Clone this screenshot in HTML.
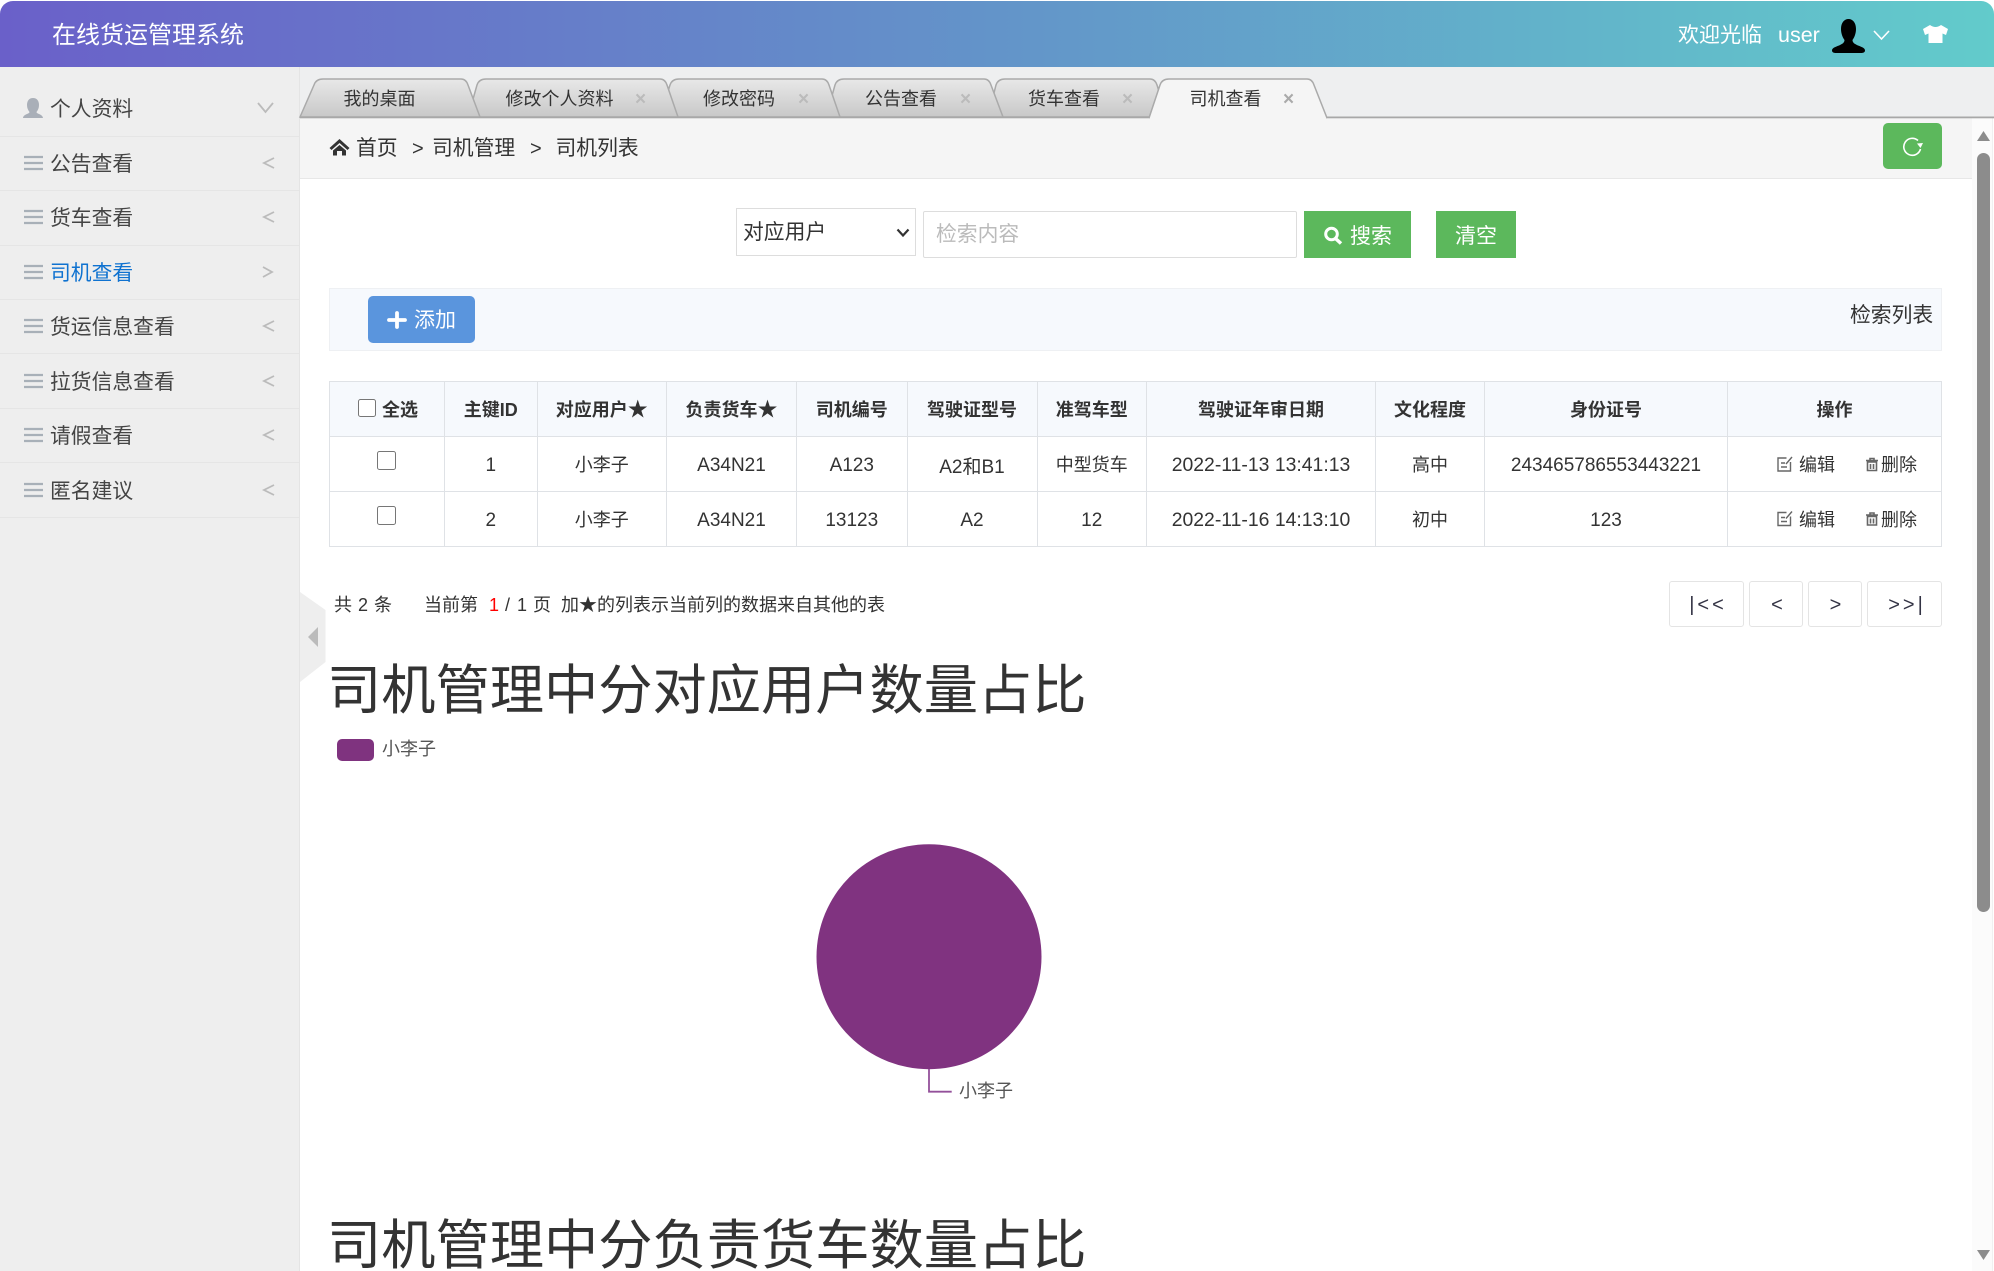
<!DOCTYPE html>
<html lang="zh-CN"><head><meta charset="utf-8"><title>在线货运管理系统</title>
<style>
html,body{margin:0;padding:0;width:1994px;height:1271px;overflow:hidden;background:#fff}
body{position:relative;font-family:"Liberation Sans","Noto Sans CJK SC",sans-serif;color:#333}
.b{position:absolute;box-sizing:border-box}
.t{position:absolute;white-space:nowrap;line-height:1}
svg{position:absolute;left:0;top:0}
.m{font-size:20.8px;color:#444;left:50px}
.tab{font-size:18px;color:#333}
.x{font-size:19px;color:#bbb;font-weight:bold}
.d{position:absolute;left:0;width:299px;height:1px;background:#e5e5e5}
table{position:absolute;left:329px;top:381px;width:1612px;border-collapse:collapse;table-layout:fixed;font-size:18px;color:#333;text-align:center}
th,td{border:1px solid #dfe2e6;padding:0;height:54px;overflow:hidden}
th{background:#f6f9fd;font-weight:bold;color:#333;line-height:1;padding-top:1px;height:53px}
th i{font-style:normal;font-size:20px;line-height:1}
td.n{font-size:19px;padding-top:3px;height:51px}
td.w{font-size:19.4px;padding-top:3px;height:51px}
input[type=checkbox]{margin:0;padding:0}
input::placeholder{color:#bbb;opacity:1}
.p{position:absolute;top:581px;height:46px;box-sizing:border-box;border:1px solid #e4e4e4;border-radius:3px;background:#fff;font-size:20px;color:#334;text-align:center;line-height:46px;letter-spacing:3px;padding-left:5px}
h2{position:absolute;left:327px;margin:0;font-size:54.25px;font-weight:normal;line-height:1;color:#333;white-space:nowrap}
</style></head><body>
<div class="b" style="left:0;top:1px;width:1994px;height:66px;border-radius:13px 13px 0 0;background:linear-gradient(90deg,#6a60c9,#6394c9 50%,#62cbcb)"></div>
<div class="b" style="left:0;top:67px;width:300px;height:1204px;background:#eee;border-right:1px solid #e4e4e4"></div>
<div class="b" style="left:300px;top:67px;width:1694px;height:50px;background:#eeeff0"></div>
<div class="b" style="left:300px;top:118px;width:1672px;height:61px;background:#f5f5f5;border-bottom:1px solid #e7e7e7"></div>
<div class="b" style="left:1972px;top:118px;width:21px;height:1153px;background:#fbfbfb;border-right:1px solid #f0f0f0"></div>
<div class="d" style="top:136px"></div><div class="d" style="top:190px"></div><div class="d" style="top:245px"></div><div class="d" style="top:299px"></div><div class="d" style="top:353px"></div><div class="d" style="top:408px"></div><div class="d" style="top:462px"></div><div class="d" style="top:517px"></div>
<div class="b" style="left:329px;top:288px;width:1613px;height:63px;background:#f6f9fd;border:1px solid #eef0f3"></div>
<svg width="1994" height="1271" viewBox="0 0 1994 1271">
<defs><linearGradient id="g" x1="0" y1="0" x2="0" y2="1"><stop offset="0" stop-color="#e8e8e8"/><stop offset="1" stop-color="#c8c8c8"/></linearGradient></defs>
<g fill="url(#g)" stroke="#aaa" stroke-width="1.5">
<path d="M988 117L996 85Q998 79 1005 79H1150Q1155 79 1157 85L1167 117Z"/>
<path d="M826 117L835 85Q837 79 844 79H984Q989 79 991 85L1003 117Z"/>
<path d="M660 117L670 85Q672 79 679 79H822Q827 79 829 85L840 117Z"/>
<path d="M468 117L477 85Q479 79 486 79H660Q665 79 667 85L678 117Z"/>
<path d="M300 117L314 85Q316 79 323 79H461Q466 79 468 85L480 117Z"/>
</g>
<rect x="300" y="116.500" width="1694" height="1.8" fill="#a8a8a8"/>
<path d="M1149 118L1160 85Q1162 79 1169 79H1307Q1312 79 1314 85L1327 118" fill="#f5f5f5" stroke="#aaa" stroke-width="1.5"/>
<path d="M1150 117.500H1326V119H1150Z" fill="#f5f5f5"/>
<!-- sidebar icons -->
<path d="M33 98c4 0 6 3 6 7 0 3-1 5-2.500 7 0 2 6 2 6.500 6H23c.5-4 6.500-4 6.500-6-1.500-2-2.500-4-2.500-7 0-4 2-7 6-7z" fill="#a9afb8"/>
<g stroke="#a8b0b8" stroke-width="2.200" fill="none">
<path d="M24 157H43M24 163H43M24 169H43"/><path d="M24 211H43M24 217H43M24 223H43"/><path d="M24 266H43M24 272H43M24 278H43"/><path d="M24 320H43M24 326H43M24 332H43"/><path d="M24 375H43M24 381H43M24 387H43"/><path d="M24 429H43M24 435H43M24 441H43"/><path d="M24 484H43M24 490H43M24 496H43"/>
</g>
<g stroke="#bbb" stroke-width="1.800" fill="none">
<path d="M258 103L265.500 112L273 103"/>
<path d="M274 158L264 163L274 168"/><path d="M274 212L264 217L274 222"/>
<path d="M263 267L272 272L263 277"/>
<path d="M274 321L264 326L274 331"/><path d="M274 376L264 381L274 386"/><path d="M274 430L264 435L274 440"/><path d="M274 485L264 490L274 495"/>
</g>
<!-- collapse handle -->
<path d="M300 592L325.500 610V662L300 682Z" fill="#eee"/>
<path d="M318 627V647L308 637Z" fill="#bbb"/>
<!-- header icons -->
<path d="M1848.500 19C1853 19 1856 23 1856 29C1856 34 1854 38 1852.500 40C1852.500 43 1855 44 1858 45.500C1862 47 1865 48 1865 50.500C1865 52.500 1863 53 1861 53L1836 53C1834 53 1832 52.500 1832 50.500C1832 48 1835 47 1839 45.500C1842 44 1844.500 43 1844.500 40C1843 38 1841 34 1841 29C1841 23 1844 19 1848.500 19Z" fill="#000"/>
<path d="M1874 31L1881.500 39L1889 31" stroke="#fff" stroke-width="1.600" fill="none"/>
<path d="M1930 25Q1935.500 29 1941 25L1948 29L1946 35L1942.500 33.500L1942.500 43L1928.500 43L1928.500 33.500L1925 35L1923 29Z" fill="#fff"/>
<!-- breadcrumb home -->
<path d="M339.500 139L349.500 148L347.500 150L339.500 143L331.500 150L329.500 148Z" fill="#333"/>
<path d="M333 150.500L339.500 145L346 150.500V155.500H342V151H337V155.500H333Z" fill="#333"/>
<!-- refresh -->
<rect x="1883" y="123" width="59" height="46" rx="5" fill="#5cb85c"/>
<path d="M1918 140.500A8.500 8.500 0 1 0 1920.500 149" stroke="#fff" stroke-width="1.600" fill="none"/>
<path d="M1917 143.500L1923 143L1920.500 148Z" fill="#fff"/>
<!-- scrollbar -->
<path d="M1983.500 131L1990 141H1977Z" fill="#8c8c8c"/>
<rect x="1977" y="153" width="13" height="759" rx="6.500" fill="#8c8c8c"/>
<path d="M1977 1250H1990L1983.500 1260Z" fill="#8c8c8c"/>
<!-- search/clear/add -->
<rect x="1304" y="211" width="107" height="47" fill="#5cb85c"/>
<rect x="1436" y="211" width="80" height="47" fill="#5cb85c"/>
<circle cx="1331.500" cy="234" r="5.800" stroke="#fff" stroke-width="3" fill="none"/>
<path d="M1335.500 238.500L1341 243.500" stroke="#fff" stroke-width="3.500"/>
<rect x="368" y="296" width="107" height="47" rx="5" fill="#5a95dd"/>
<path d="M397 313V327M389 320H405" stroke="#fff" stroke-width="3.800" stroke-linecap="round"/>
<!-- pie -->
<rect x="337" y="739" width="37" height="22" rx="5" fill="#7f337f"/>
<circle cx="929" cy="956.700" r="112.500" fill="#803380"/>
<path d="M929 1069V1091.700H951.700" stroke="#93509a" stroke-width="1.800" fill="none"/>
</svg>
<div class="t" style="left:52px;top:24px;font-size:24px;color:#fff">在线货运管理系统</div>
<div class="t" style="left:1678px;top:25px;font-size:21px;color:#fff">欢迎光临</div>
<div class="t" style="left:1778px;top:25px;font-size:21.500px;color:#fff">user</div>
<div class="t tab" style="left:343.500px;top:90px">我的桌面</div>
<div class="t tab" style="left:505.500px;top:90px">修改个人资料</div><div class="t x" style="left:635px;top:90px">×</div>
<div class="t tab" style="left:703px;top:90px">修改密码</div><div class="t x" style="left:798px;top:90px">×</div>
<div class="t tab" style="left:865px;top:90px">公告查看</div><div class="t x" style="left:960px;top:90px">×</div>
<div class="t tab" style="left:1028px;top:90px">货车查看</div><div class="t x" style="left:1122px;top:90px">×</div>
<div class="t tab" style="left:1189.500px;top:90px">司机查看</div><div class="t x" style="left:1283px;top:90px;color:#aaa">×</div>
<div class="t m" style="top:100px">个人资料</div>
<div class="t m" style="top:155px">公告查看</div>
<div class="t m" style="top:209px">货车查看</div>
<div class="t m" style="top:264px;color:#0f72d0">司机查看</div>
<div class="t m" style="top:318px">货运信息查看</div>
<div class="t m" style="top:373px">拉货信息查看</div>
<div class="t m" style="top:427px">请假查看</div>
<div class="t m" style="top:482px">匿名建议</div>
<div class="t" style="left:356px;top:139px;font-size:20.800px">首页</div>
<div class="t" style="left:412px;top:139px;font-size:20px">&gt;</div>
<div class="t" style="left:432px;top:139px;font-size:20.800px">司机管理</div>
<div class="t" style="left:530px;top:139px;font-size:20px">&gt;</div>
<div class="t" style="left:555.500px;top:139px;font-size:20.800px">司机列表</div>
<select class="b" style="left:736px;top:208px;width:180px;height:48px;font:20.800px 'Liberation Sans','Noto Sans CJK SC',sans-serif;color:#333;background:#fff;border:1px solid #ddd;padding:1px 0 0 6px;outline:0;appearance:none;-webkit-appearance:none"><option>对应用户</option></select>
<input class="b" placeholder="检索内容" style="left:923px;top:211px;width:374px;height:47px;font:20.800px 'Liberation Sans','Noto Sans CJK SC',sans-serif;border:1px solid #ddd;border-radius:2px;padding:1px 12px 0;outline:0;background:#fff">
<svg width="1994" height="1271" viewBox="0 0 1994 1271" style="pointer-events:none"><path d="M897.500 229.500L903 235.500L908.500 229.500" stroke="#333" stroke-width="2.200" fill="none"/></svg>
<div class="t" style="left:1350px;top:226px;font-size:21px;color:#fff">搜索</div>
<div class="t" style="left:1455px;top:226px;font-size:21px;color:#fff">清空</div>
<div class="t" style="left:414px;top:310px;font-size:21px;color:#fff">添加</div>
<div class="t" style="left:1850px;top:306px;font-size:20.800px">检索列表</div>
<table>
<colgroup><col style="width:115px"><col style="width:92.500px"><col style="width:129.500px"><col style="width:130px"><col style="width:110.500px"><col style="width:130px"><col style="width:109.500px"><col style="width:229px"><col style="width:109px"><col style="width:243px"><col style="width:214px"></colgroup>
<tr><th style="text-align:left;position:relative"><input type="checkbox" style="position:absolute;left:28px;top:17px;width:18px;height:18px"><span style="position:absolute;left:52px;top:19px;line-height:1">全选</span></th><th>主键ID</th><th>对应用户<i>★</i></th><th>负责货车<i>★</i></th><th>司机编号</th><th>驾驶证型号</th><th>准驾车型</th><th>驾驶证年审日期</th><th>文化程度</th><th>身份证号</th><th>操作</th></tr>
<tr><td style="position:relative"><input type="checkbox" style="position:absolute;left:47px;top:14px;width:19px;height:19px"></td><td class="n">1</td><td>小李子</td><td class="n">A34N21</td><td class="n">A123</td><td class="n">A2和B1</td><td>中型货车</td><td class="w">2022-11-13 13:41:13</td><td>高中</td><td class="n">243465786553443221</td><td></td></tr>
<tr><td style="position:relative"><input type="checkbox" style="position:absolute;left:47px;top:14px;width:19px;height:19px"></td><td class="n">2</td><td>小李子</td><td class="n">A34N21</td><td class="n">13123</td><td class="n">A2</td><td class="n">12</td><td class="w">2022-11-16 14:13:10</td><td>初中</td><td class="n">123</td><td></td></tr>
</table>
<svg width="1994" height="1271" viewBox="0 0 1994 1271" style="pointer-events:none">
<g fill="none" stroke="#666" stroke-width="1.400">
<path d="M1790.500 462V471H1778V458H1786.500M1781 463H1785M1781 467H1787M1786 464L1792 457"/>
<path d="M1866 460.500H1878M1870 460V458.500H1874V460M1867.500 462H1876.500V470.500H1867.500ZM1870.500 464V469M1873.500 464V469" stroke-width="1.600"/>
</g>
<g fill="none" stroke="#666" stroke-width="1.400" transform="translate(0 54.500)">
<path d="M1790.500 462V471H1778V458H1786.500M1781 463H1785M1781 467H1787M1786 464L1792 457"/>
<path d="M1866 460.500H1878M1870 460V458.500H1874V460M1867.500 462H1876.500V470.500H1867.500ZM1870.500 464V469M1873.500 464V469" stroke-width="1.600"/>
</g>
</svg>
<div class="t" style="left:1799px;top:456px;font-size:18px">编辑</div><div class="t" style="left:1881px;top:456px;font-size:18px">删除</div>
<div class="t" style="left:1799px;top:511px;font-size:18px">编辑</div><div class="t" style="left:1881px;top:511px;font-size:18px">删除</div>
<div class="t" style="left:334px;top:596px;font-size:18px;word-spacing:1px">共 2 条</div>
<div class="t" style="left:424px;top:596px;font-size:18px">当前第</div>
<div class="t" style="left:489px;top:596px;font-size:18px;color:#f00">1</div>
<div class="t" style="left:505px;top:596px;font-size:18px">/</div>
<div class="t" style="left:517px;top:596px;font-size:18px">1</div>
<div class="t" style="left:533px;top:596px;font-size:18px">页</div>
<div class="t" style="left:561px;top:596px;font-size:18px">加★的列表示当前列的数据来自其他的表</div>
<div class="p" style="left:1669px;width:75px;padding-left:3px">|&lt;&lt;</div>
<div class="p" style="left:1749px;width:54px">&lt;</div>
<div class="p" style="left:1808px;width:54px;padding-left:4px">&gt;</div>
<div class="p" style="left:1867px;width:75px">&gt;&gt;|</div>
<h2 style="top:664px">司机管理中分对应用户数量占比</h2>
<div class="t" style="left:382px;top:740px;font-size:18px;color:#555">小李子</div>
<div class="t" style="left:959px;top:1082px;font-size:18px;color:#555">小李子</div>
<h2 style="top:1219px">司机管理中分负责货车数量占比</h2>
</body></html>
